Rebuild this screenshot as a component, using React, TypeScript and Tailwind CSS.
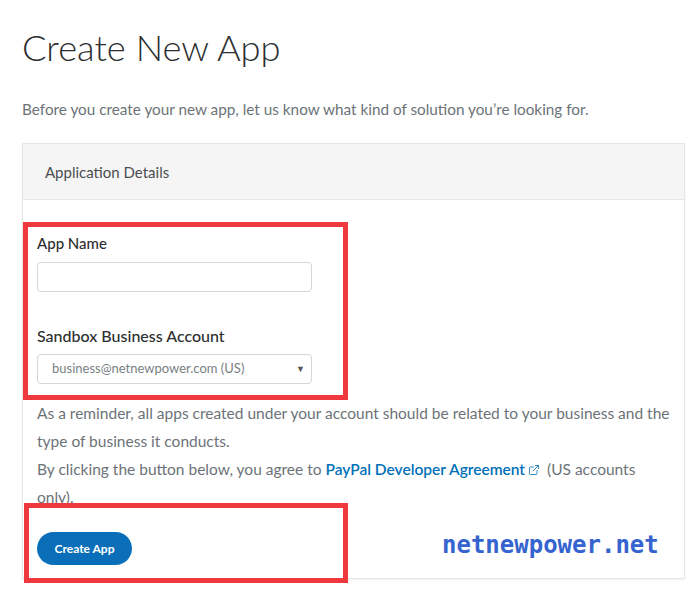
import { ExternalLink } from "lucide-react";

export default function App() {
  return (
    <div className="relative w-[700px] h-[590px] overflow-hidden bg-white pl-[22px] pr-[15px] font-['Lato',sans-serif] text-[#6c7378]">
      <h1 className="pt-[22px] text-[36.3px] font-light leading-[50px] text-[#2c2e2f]">
        Create New App
      </h1>
      <p className="mt-[25px] text-[15.3px] leading-[24px]">
        Before you create your new app, let us know what kind of solution you’re looking for.
      </p>

      <div className="mt-[22px] border border-[#e6e6e6] shadow-[0_1px_2px_rgba(0,0,0,0.06)]">
        <div className="flex h-[56px] items-center border-b border-[#e6e6e6] bg-[#f5f5f5] px-[22px] pt-[2px] text-[15px] text-[#4a4d4f]">
          Application Details
        </div>
        <div className="px-[14px] pt-[31px] pb-[13px]">
          <label className="block text-[15px] font-medium leading-[24px] text-[#2c2e2f]">
            App Name
          </label>
          <input
            type="text"
            className="mt-[7px] block h-[30px] w-[275px] rounded-[4px] border border-[#d6d6d6] bg-white"
          />
          <label className="mt-[32px] block text-[16px] font-medium leading-[24px] text-[#2c2e2f]">
            Sandbox Business Account
          </label>
          <div className="mt-[6px] flex h-[30px] w-[275px] items-center justify-between rounded-[4px] border border-[#d6d6d6] pl-[14px] pr-[6px] text-[13px] text-[#7a7f83]">
            <span>business@netnewpower.com (US)</span>
            <span className="text-[9px] text-[#555]">▼</span>
          </div>
          <p className="mt-[15px] text-[15.5px] leading-[28px]">
            As a reminder, all apps created under your account should be related to your business and the
            type of business it conducts.
            <br />
            By clicking the button below, you agree to{" "}
            <span className="font-semibold text-[#0070ba]">PayPal Developer Agreement</span>
            <ExternalLink className="mx-[3px] inline h-[12px] w-[12px] align-[-1px] text-[#0070ba]" strokeWidth={1.6} />
            {" "}(US accounts
            <br />
            only).
          </p>
          <button className="mt-[21px] h-[33px] w-[95px] rounded-full bg-[#0a6fb8] text-[12px] font-bold text-white">
            Create App
          </button>
        </div>
      </div>

      <div className="absolute left-[23px] top-[222px] h-[178px] w-[325px] border-[5px] border-[#f0393e]" />
      <div className="absolute left-[24px] top-[503px] h-[80px] w-[324px] border-[5px] border-[#f0393e]" />

      <div className="absolute left-[442px] top-[530px] font-['DejaVu_Sans_Mono',monospace] text-[24px] font-bold leading-[30px] text-[#3563cf]">
        netnewpower.net
      </div>
    </div>
  );
}
